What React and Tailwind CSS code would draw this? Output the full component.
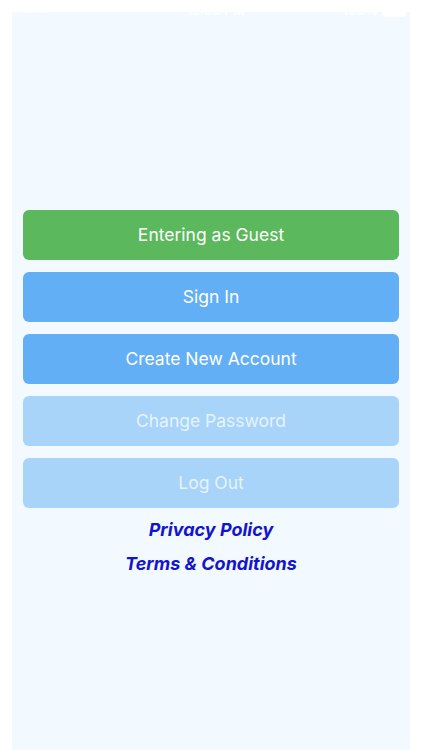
import React from "react";

const font = { fontFamily: "Inter, 'Open Sans', sans-serif" };

function Btn({ children, className }) {
  return (
    <div
      className={`h-[50px] rounded-[6px] flex items-center justify-center text-[17.5px] ${className}`}
    >
      {children}
    </div>
  );
}

export default function App() {
  return (
    <div className="relative w-[422px] h-[750px] bg-white overflow-hidden" style={font}>
      <div className="ml-[12px] mr-[12px] mt-[12px] h-[738px] bg-[#f2faff] pt-[198px] px-[11px]">
        <div className="flex flex-col gap-[12px]">
          <Btn className="bg-[#5cb85c] text-white">Entering as Guest</Btn>
          <Btn className="bg-[#62aff5] text-white">Sign In</Btn>
          <Btn className="bg-[#62aff5] text-white">Create New Account</Btn>
          <Btn className="bg-[#a8d4f9] text-[#e6f3fd]">Change Password</Btn>
          <Btn className="bg-[#a8d4f9] text-[#e6f3fd]">Log Out</Btn>
        </div>
        <div className="flex flex-col items-center mt-[11px] gap-[12px] text-[#1414cf] text-[18px] font-bold italic leading-[22px]">
          <div>Privacy Policy</div>
          <div>Terms &amp; Conditions</div>
        </div>
      </div>
      <div className="absolute top-0 left-0 w-full h-[22px] flex items-center justify-between px-[16px] text-white text-[13px] font-semibold">
        <span>••••• </span>
        <span className="ml-[40px]">12:30 PM</span>
        <span className="flex items-center gap-[4px]">
          <span>100%</span>
          <span className="w-[24px] h-[11px] border border-white rounded-[3px] bg-white"></span>
        </span>
      </div>
    </div>
  );
}
